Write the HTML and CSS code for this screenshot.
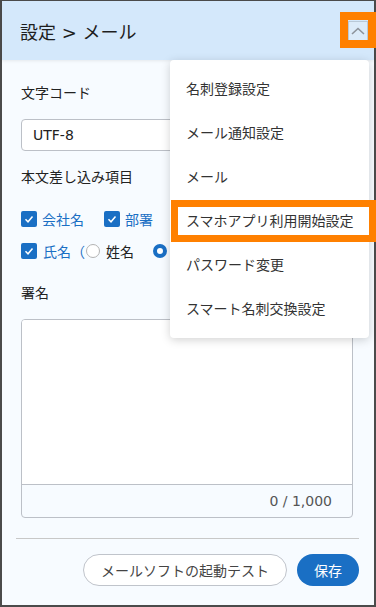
FILE: index.html
```html
<!DOCTYPE html>
<html lang="ja">
<head>
  <meta charset="UTF-8" />
  <meta name="viewport" content="width=device-width, initial-scale=1.0"/>
  <title>設定 &gt; メール</title>
  <link rel="stylesheet" href="styles.css">
</head>
<body>
  <div class="frame">
    <header class="head">
      <h1 class="title">設定 &gt; メール</h1>
      <button class="toggle" title="閉じる">
        <svg width="14" height="8" viewBox="0 0 14 8"><polyline points="1,7 7,1.5 13,7" fill="none" stroke="#8d939b" stroke-width="1.6"/></svg>
      </button>
    </header>

    <main class="content">
      <div class="label first">文字コード</div>
      <div class="select">
        <span>UTF-8</span>
        <svg width="10" height="6" viewBox="0 0 10 6"><polyline points="1,1 5,5 9,1" fill="none" stroke="#666" stroke-width="1.4"/></svg>
      </div>

      <div class="label">本文差し込み項目</div>
      <div class="opts row-one">
        <label class="check">
          <svg width="16" height="16" viewBox="0 0 16 16"><rect width="16" height="16" rx="2" fill="#1a6fc4"/><polyline points="4.5,8.3 7,10.8 11.5,5.6" fill="none" stroke="#fff" stroke-width="1.5"/></svg>
          <span>会社名</span>
        </label>
        <label class="check">
          <svg width="16" height="16" viewBox="0 0 16 16"><rect width="16" height="16" rx="2" fill="#1a6fc4"/><polyline points="4.5,8.3 7,10.8 11.5,5.6" fill="none" stroke="#fff" stroke-width="1.5"/></svg>
          <span>部署</span>
        </label>
      </div>
      <div class="opts row-two">
        <label class="check">
          <svg width="16" height="16" viewBox="0 0 16 16"><rect width="16" height="16" rx="2" fill="#1a6fc4"/><polyline points="4.5,8.3 7,10.8 11.5,5.6" fill="none" stroke="#fff" stroke-width="1.5"/></svg>
          <span>氏名（</span>
        </label>
        <label class="radio">
          <span class="dot"></span>
          <span class="plain">姓名</span>
        </label>
        <label class="radio">
          <span class="dot on"></span>
        </label>
      </div>

      <div class="label">署名</div>
      <div class="sign">
        <div class="sign-area"></div>
        <div class="counter">0 / 1,000</div>
      </div>
    </main>

    <footer class="actions">
      <button class="btn btn-outline">メールソフトの起動テスト</button>
      <button class="btn btn-save">保存</button>
    </footer>
  </div>

  <!-- settings menu -->
  <nav class="menu">
    <a class="menu-item">名刺登録設定</a>
    <a class="menu-item">メール通知設定</a>
    <a class="menu-item">メール</a>
    <a class="menu-item">スマホアプリ利用開始設定</a>
    <a class="menu-item">パスワード変更</a>
    <a class="menu-item">スマート名刺交換設定</a>
  </nav>

  <!-- highlight marks -->
  <div class="mark mark-toggle"></div>
  <div class="mark mark-item"></div>
</body>
</html>
```

FILE: styles.css
```css
:root {
  --page-bg: #f7fbff;
  --head-bg: #d4e8fb;
  --blue: #1a6fc4;
  --text: #222;
  --line: #bcc0c7;
  --mark: #ff8000;
}
body {
  margin: 0;
  width: 376px;
  height: 607px;
  overflow: hidden;
  position: relative;
  font-family: 'DejaVu Sans', 'Noto Sans CJK JP', sans-serif;
  font-size: 14px;
  color: var(--text);
}
.frame {
  box-sizing: border-box;
  height: 607px;
  border: 2px solid #4b4b4b;
  border-top-width: 1px;
  background: var(--page-bg);
  display: flex;
  flex-direction: column;
}
.head {
  height: 59px;
  flex: none;
  background: var(--head-bg);
  display: flex;
  align-items: center;
  justify-content: space-between;
  padding: 0 6px 0 18px;
  box-shadow: 0 1px 3px rgba(0, 0, 0, 0.08);
}
.title {
  margin: 0;
  font-size: 18px;
  font-weight: normal;
  color: #1e1e1e;
}
.toggle {
  width: 20px;
  height: 21px;
  margin-top: 1px;
  padding: 0;
  border: 1px solid #b9c9d8;
  background: #dcebf9;
  display: flex;
  align-items: center;
  justify-content: center;
}
.content {
  padding: 23px 21px 0 19px;
}
.label {
  line-height: 20px;
  margin-top: 16px;
}
.label.first {
  margin-top: 0;
}
.select {
  box-sizing: border-box;
  height: 32px;
  margin-top: 16px;
  background: #fff;
  border: 1px solid var(--line);
  border-radius: 4px;
  display: flex;
  align-items: center;
  justify-content: space-between;
  padding: 0 12px 0 11px;
}
.opts {
  display: flex;
  align-items: center;
  height: 20px;
  margin-top: 12px;
}
.opts.row-one {
  margin-top: 22px;
}
.check {
  display: flex;
  align-items: center;
  gap: 5px;
  margin-right: 20px;
  color: var(--blue);
}
.row-two .check {
  margin-right: 0;
  gap: 6px;
}
.radio {
  display: flex;
  align-items: center;
  gap: 6px;
  margin-left: 1px;
  margin-right: 18px;
}
.dot {
  box-sizing: border-box;
  width: 14px;
  height: 14px;
  border-radius: 50%;
  border: 1px solid #b3b3b3;
  background: #fff;
}
.dot.on {
  border: 4px solid var(--blue);
}
.label + .sign {
  margin-top: 16px;
}
.opts + .label {
  margin-top: 22px;
}
.sign {
  background: var(--page-bg);
  border: 1px solid var(--line);
  border-radius: 4px;
  overflow: hidden;
}
.sign-area {
  height: 164px;
  background: #fff;
  border-bottom: 1px solid var(--line);
}
.counter {
  height: 32px;
  line-height: 32px;
  text-align: right;
  padding-right: 20px;
  color: #555;
}
.actions {
  margin: 20px 15px 0 14px;
  padding-top: 15px;
  border-top: 1px solid #c8c8c8;
  display: flex;
  justify-content: flex-end;
  gap: 10px;
}
.btn {
  height: 32px;
  border-radius: 16px;
  font-family: inherit;
  font-size: 14px;
  padding: 0 17px;
}
.btn-outline {
  background: #fff;
  border: 1px solid #c0c4cb;
  color: #444;
}
.btn-save {
  background: var(--blue);
  border: none;
  color: #fff;
}
/* dropdown menu */
.menu {
  position: absolute;
  left: 170px;
  top: 60px;
  width: 199px;
  padding: 7px 0;
  background: #fff;
  border-radius: 4px;
  box-shadow: 0 2px 10px rgba(0, 0, 0, 0.18);
}
.menu-item {
  display: block;
  height: 44px;
  line-height: 44px;
  padding-left: 16px;
  color: #333;
}
/* orange highlight marks */
.mark {
  position: absolute;
  box-sizing: border-box;
  border: 8px solid var(--mark);
}
.mark-toggle {
  left: 340px;
  top: 12px;
  width: 36px;
  height: 36px;
}
.mark-item {
  left: 171px;
  top: 200px;
  width: 205px;
  height: 42px;
  border-width: 7px;
}
```
